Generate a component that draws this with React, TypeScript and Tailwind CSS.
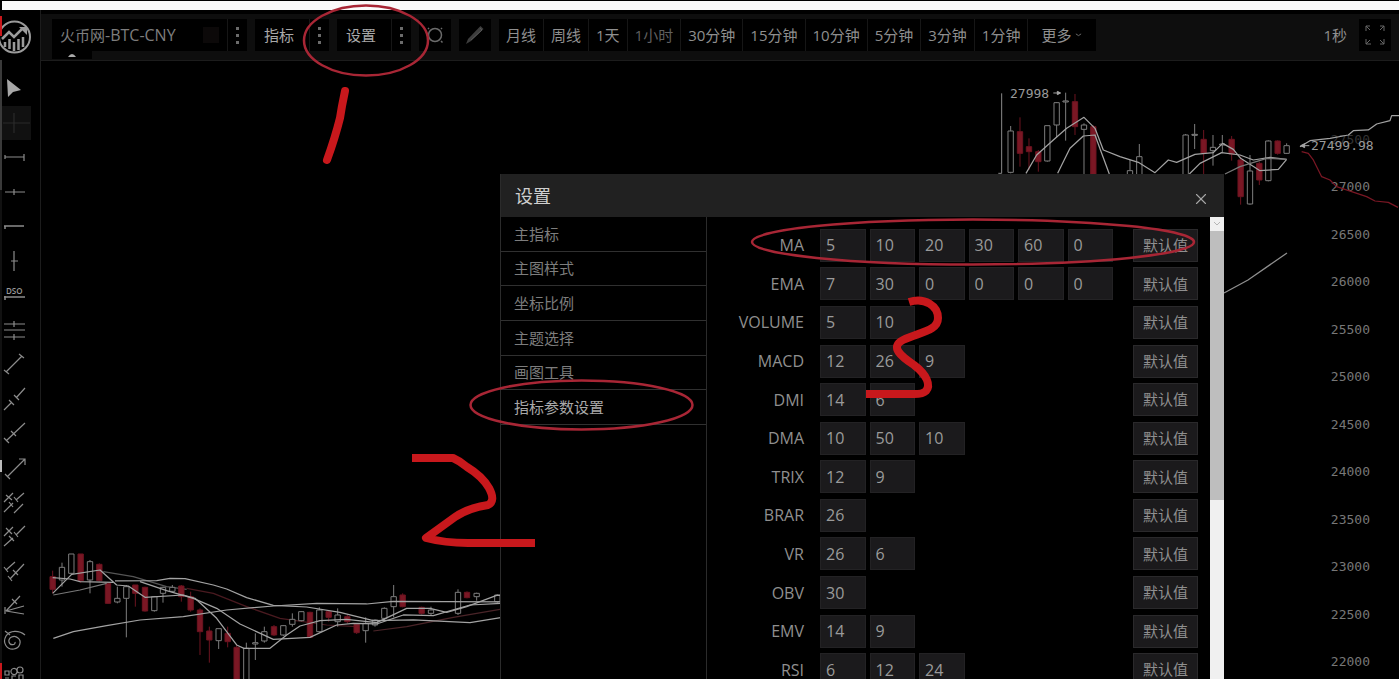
import { useState } from 'react'
import type { ReactNode } from 'react'
import { X } from 'lucide-react'

// x, body top, body bottom, wick top, wick bottom, falling
type Candle = [number, number, number, number, number, boolean]

const LEFT_CANDLES: Candle[] = [
  [38, 140, 178, 122, 190, true], [66, 112, 150, 98, 170, false], [94, 72, 130, 72, 135, false],
  [122, 72, 152, 72, 158, true], [150, 95, 150, 90, 190, false], [178, 103, 152, 100, 155, true],
  [204, 160, 220, 160, 222, true], [232, 205, 216, 170, 220, false], [259, 170, 205, 165, 322, false],
  [286, 165, 190, 165, 230, true], [315, 172, 243, 170, 245, true], [343, 200, 242, 198, 245, false],
  [369, 172, 190, 170, 218, false], [397, 172, 184, 165, 188, false], [424, 168, 200, 165, 215, true],
  [452, 200, 240, 185, 245, true], [480, 240, 305, 235, 375, true], [508, 303, 330, 290, 398, true],
  [536, 296, 332, 296, 357, false], [563, 310, 335, 290, 352, true], [590, 352, 450, 345, 450, true],
  [619, 355, 450, 338, 450, false], [646, 338, 342, 310, 390, false], [673, 305, 333, 290, 338, false],
  [702, 290, 315, 285, 318, true], [730, 287, 315, 285, 318, false], [757, 268, 283, 250, 290, false],
  [784, 245, 272, 243, 274, false], [810, 247, 322, 245, 322, true], [838, 240, 305, 232, 308, false],
  [866, 245, 262, 243, 275, true], [893, 255, 275, 235, 290, false], [922, 260, 275, 255, 280, true],
  [950, 283, 308, 280, 312, true], [977, 280, 302, 262, 338, false], [1005, 270, 285, 268, 290, false],
  [1033, 235, 265, 232, 270, false], [1061, 200, 230, 165, 262, false], [1088, 195, 230, 190, 232, true],
  [1145, 232, 250, 230, 254, true], [1173, 240, 250, 230, 255, false], [1254, 187, 250, 178, 255, false],
  [1281, 187, 203, 184, 205, true], [1310, 190, 200, 188, 212, false], [1372, 195, 215, 193, 218, false],
]

const RIGHT_CANDLES: Candle[] = [
  [272, 393, 517, 378, 520, false], [300, 395, 460, 352, 500, true], [327, 440, 455, 415, 510, true],
  [355, 455, 485, 450, 515, true], [382, 377, 483, 377, 485, false], [410, 308, 375, 306, 412, false],
  [437, 303, 306, 278, 422, false], [465, 305, 380, 282, 405, true], [492, 375, 388, 370, 525, false],
  [520, 380, 530, 376, 530, true], [630, 512, 530, 480, 530, false], [658, 470, 530, 432, 530, false],
  [797, 405, 530, 402, 530, false], [824, 403, 406, 372, 447, false], [851, 418, 460, 390, 530, true],
  [879, 442, 452, 405, 497, false], [907, 432, 435, 405, 458, false], [935, 418, 462, 408, 482, true],
  [962, 480, 590, 470, 614, true], [990, 513, 612, 465, 614, false], [1018, 490, 540, 485, 555, true],
  [1045, 423, 542, 421, 544, false], [1073, 423, 460, 421, 464, true], [1100, 437, 460, 430, 462, false],
]

const PRICES = [27000, 26500, 26000, 25500, 25000, 24500, 24000, 23500, 23000, 22500, 22000]

const PERIODS = ['月线', '周线', '1天', '1小时', '30分钟', '15分钟', '10分钟', '5分钟', '3分钟', '1分钟']

const MENU = ['主指标', '主图样式', '坐标比例', '主题选择', '画图工具', '指标参数设置']

const PARAMS: { name: string; values: number[] }[] = [
  { name: 'MA', values: [5, 10, 20, 30, 60, 0] },
  { name: 'EMA', values: [7, 30, 0, 0, 0, 0] },
  { name: 'VOLUME', values: [5, 10] },
  { name: 'MACD', values: [12, 26, 9] },
  { name: 'DMI', values: [14, 6] },
  { name: 'DMA', values: [10, 50, 10] },
  { name: 'TRIX', values: [12, 9] },
  { name: 'BRAR', values: [26] },
  { name: 'VR', values: [26, 6] },
  { name: 'OBV', values: [30] },
  { name: 'EMV', values: [14, 9] },
  { name: 'RSI', values: [6, 12, 24] },
]

const TOOLS: { label: string; icon: ReactNode }[] = [
  { label: '光标', icon: <path d="M7 8l14 11-8 2-5 5z" fill="#a8a8a8" stroke="none" /> },
  { label: '十字线', icon: <path d="M14 7v20M3 17h27" stroke="#2b2b2b" /> },
  { label: '线段', icon: <path d="M5 17h19M5 15v4M24 14v7" /> },
  { label: '水平线', icon: <path d="M5 17h20M14 14v6" /> },
  { label: '射线', icon: <path d="M4 17h20M5 17v3" strokeWidth="1.5" /> },
  { label: '垂直线', icon: <path d="M14 7v20M11 17h7" /> },
  {
    label: '价格线',
    icon: (
      <>
        <text x="6" y="16" fontSize="8" fontWeight="600" fill="#999" stroke="none">DSO</text>
        <path d="M4 19h21M5 18v4" strokeWidth="1.5" />
      </>
    ),
  },
  { label: '平行线', icon: <path d="M4 11h21M4 17h21M4 24h21M14 8v6M14 21v6" /> },
  { label: '趋势线', icon: <path d="M6 25L22 9M4 23l5 4M19 7l5 4" /> },
  { label: '延长线', icon: <path d="M4 28l8-8M9 18l5 5M16 16l9-10M14 13l5 5" /> },
  { label: '单向线', icon: <path d="M6 25L25 7M4 22l5 5M11 15l5 5" /> },
  { label: '箭头', icon: <path d="M7 26L25 8M5 23l5 5M19 8h6v6" /> },
  { label: '平行通道', icon: <path d="M4 17l9-9M16 15l8-7M4 27l9-9M14 28l9-9M6 10l6 5M14 12l4 5M9 17l4 5" /> },
  { label: '平行射线', icon: <path d="M4 16l9-9M16 15l9-9M4 26l9-8M6 8l6 6M14 12l4 5M9 16l5 5" /> },
  { label: '平行线段', icon: <path d="M6 16l9-8M10 25l14-15M4 13l4 5M8 22l4 5M13 16l5 5" /> },
  { label: '扇形', icon: <path d="M6 22L20 7M6 22l18-5M6 22l18 3M12 10l5 5M5 18v7" /> },
  { label: '螺旋', icon: <path d="M5 8l5 4M25 12C19 7 10 7 6 13c-4 7 1 14 8 13 6-1 8-8 4-11-4-4-10 0-9 4 1 4 7 3 6 0" /> },
  { label: '标记', icon: <path d="M5 13h4v4H5zM5 20h4M11 14a3 3 0 106-1 3 3 0 10-6 1M17 12a3 3 0 106 0 3 3 0 10-6 0M12 21v-3h4M19 21v-4h4v4" /> },
]

function Candles({ items }: { items: Candle[] }) {
  return (
    <>
      {items.map(([x, top, bottom, high, low, falling]) => (
        <g key={x} stroke={falling ? '#6d1420' : '#7d7d7d'} strokeWidth="1">
          <path d={`M${x} ${high}V${top}M${x} ${bottom}V${low}`} vectorEffect="non-scaling-stroke" />
          <rect
            x={x - 8}
            y={top}
            width="16"
            height={bottom - top}
            fill={falling ? '#7a1724' : '#000'}
            vectorEffect="non-scaling-stroke"
          />
        </g>
      ))}
    </>
  )
}

function Line({ points, color = '#a3a3a3' }: { points: string; color?: string }) {
  return (
    <polyline
      points={points}
      stroke={color}
      strokeWidth="1.25"
      strokeLinejoin="round"
      fill="none"
      vectorEffect="non-scaling-stroke"
    />
  )
}

function Chart() {
  return (
    <svg
      className="absolute inset-0 h-full w-full"
      viewBox="41 61 1358 618"
      preserveAspectRatio="xMinYMin slice"
      fill="none"
      aria-hidden="true"
    >
      <g transform="translate(40 530) scale(0.33333)">
        <Line color="#4a1a20" points="440,175 520,190 620,230 720,265 860,285 950,290" />
        <Line color="#4a2428" points="1000,303 1100,290 1240,262 1380,238" />
        <Line color="#555" points="190,125 280,140 380,170 440,178" />
        <Candles items={LEFT_CANDLES} />
        <Line points="40,325 100,305 200,287 300,270 430,260 560,240 700,228 830,220 980,222 1060,214 1380,216" />
        <Line points="38,190 95,133 180,120 230,165 265,168 315,202 430,195 465,205 530,265 590,345 612,355 690,355 740,315 780,288 840,272 920,268 1010,278 1100,235 1170,235 1220,247 1280,230 1370,196 1382,196" />
        <Line points="225,153 350,152 390,145 435,146 520,165 560,177 620,203 700,226 800,231 900,247 1000,272 1120,270 1290,278 1382,263" />
        <Line points="38,143 90,147 120,155 220,157" />
        <Line color="#777" points="40,195 120,180 200,160" />
        <Line points="300,155 380,182 460,205 530,235 600,282 700,328 810,322 890,285 940,280 1010,282 1090,255 1180,257 1290,225 1382,220" />
      </g>
      <g transform="scale(0.33333) translate(2760 0)">
        <path d="M245 280V520h-10" stroke="#8a8a8a" vectorEffect="non-scaling-stroke" />
        <path d="M428 304h18M815 404h18" stroke="#8a8a8a" vectorEffect="non-scaling-stroke" />
        <Candles items={RIGHT_CANDLES} />
        <Line points="318,520 350,465 400,420 440,385 492,352 525,385 550,450 600,470 655,487 705,518 745,480 770,487 825,463 880,458 908,430 940,448 962,475 990,493 1020,512 1075,508 1100,478" />
        <Line points="413,520 450,445 490,408 525,405 545,460 568,522" />
        <Line points="808,522 840,490 905,458 960,465 1000,480 1050,472 1100,478" />
        <Line color="#777" points="915,522 960,500 1040,475 1100,478" />
        <Line points="1140,440 1170,422 1230,415 1285,405 1300,392 1345,390 1370,372 1410,362 1415,347 1437,347" />
        <Line color="#7a1724" points="1145,455 1165,460 1180,480 1205,530 1230,540 1250,560 1340,590 1365,603 1405,607 1434,622" />
        <path d="M400 279h20m-8-5l10 5-10 5z" stroke="#a3a3a3" fill="#a3a3a3" vectorEffect="non-scaling-stroke" />
        <path d="M1168 437h-24m10-6l-12 6 12 6z" stroke="#a3a3a3" fill="#a3a3a3" vectorEffect="non-scaling-stroke" />
      </g>
      <path d="M1224 293l24-13 39-27" stroke="#8f8f8f" strokeWidth="1.25" />
      <g fill="#9a9a9a" fontSize="13" className="font-['DejaVu_Sans_Mono',monospace]">
        <text x="1010" y="98">27998</text>
        <text x="1311" y="150">27499.98</text>
      </g>
    </svg>
  )
}

function Logo() {
  return (
    <svg className="h-[34px] w-8 shrink-0" viewBox="0 0 32 34" fill="none" stroke="#9b9b9b" aria-label="logo">
      <circle cx="14.5" cy="17" r="15.5" strokeWidth="2" />
      <path d="M2 19l7-7 5 5 9-9" strokeWidth="2.5" />
      <path d="M19 7h8v8z" fill="#9b9b9b" stroke="none" />
      <path d="M5 22v5M9.5 19v10M14 22v9M18.5 19v11M23 17v10" strokeWidth="2.5" />
    </svg>
  )
}

function Sidebar() {
  return (
    <aside className="relative flex w-[41px] shrink-0 flex-col overflow-hidden border-r border-[#1c1c1c] pt-[10px]">
      <Logo />
      <div className="mt-[17px] grid h-[621px] shrink-0 auto-rows-fr">
        {TOOLS.map((tool, i) => (
          <button
            key={tool.label}
            type="button"
            aria-label={tool.label}
            className={`flex w-[31px] items-center ${i === 1 ? 'bg-[#111]' : ''}`}
          >
            <svg className="h-[34px] w-[30px]" viewBox="0 0 30 34" fill="none" stroke="#8c8c8c" strokeWidth="1.2">
              {tool.icon}
            </svg>
          </button>
        ))}
      </div>
      {/* edge of the panel docked on the left */}
      <div className="absolute inset-y-0 left-0 flex w-0.5 flex-col">
        <div className="mt-[6px] h-5 bg-[#c8181c]" />
        <div className="mt-6 h-[130px] bg-[#3a3a3a]" />
        <div className="h-[270px] bg-[#111]" />
        <div className="h-3 bg-[#bbb]" />
        <div className="flex-1 bg-[#111]" />
        <div className="h-4 bg-[#c8181c]" />
      </div>
    </aside>
  )
}

function Dots() {
  return (
    <span className="flex h-full w-5 flex-col items-center justify-center gap-1 border-l border-[#161616]">
      <i className="size-[3px] bg-[#6b6b6b]" />
      <i className="size-[3px] bg-[#6b6b6b]" />
      <i className="size-[3px] bg-[#6b6b6b]" />
    </span>
  )
}

function Toolbar() {
  return (
    <header className="mt-1 border-b border-[#1c1c1c] bg-[#0e0e0e] pt-[5px] pb-px pr-2 pl-[11px] text-[15px] text-[#8f8f8f]">
      <div className="flex h-8 gap-2 whitespace-nowrap">
        <button type="button" className="flex w-[195px] items-center bg-black pl-2 text-[#7d7d7d]">
          <span className="flex-1 text-left">
            火币网<span className="text-base">-BTC-CNY</span>
          </span>
          <i className="mr-2 h-4 w-4 bg-[#0c0909]" />
          <Dots />
        </button>
        <button type="button" className="flex w-[74px] items-center bg-black pl-[9px] text-[#a8a8a8]">
          <span className="flex-1 text-left">指标</span>
          <Dots />
        </button>
        <button type="button" className="flex w-[74px] items-center bg-black pl-[9px] text-[#a8a8a8]">
          <span className="flex-1 text-left">设置</span>
          <Dots />
        </button>
        <button type="button" aria-label="搜索" className="flex w-8 items-center justify-center bg-black">
          <svg className="size-5" viewBox="0 0 20 20" fill="none" stroke="#6b6b6b" strokeWidth="1.5">
            <circle cx="10" cy="10" r="6.5" />
            <path d="M16 16l1.5 1.5M4 4L3 3M16 4l1-1" />
          </svg>
        </button>
        <button type="button" aria-label="画笔" className="flex w-8 items-center justify-center bg-black">
          <svg className="size-5" viewBox="0 0 20 20">
            <path d="M15.5 1l3 3L6 16l-5 3 2-5z" fill="#3d3d3d" />
            <path d="M15 3l2 2L6 15" stroke="#555" fill="none" />
          </svg>
        </button>
        <nav className="flex bg-black">
          {PERIODS.map((period) => (
            <button
              key={period}
              type="button"
              className={`border-r border-[#161616] px-[7px] ${period === '1小时' ? 'text-[#5f5f5f]' : ''}`}
            >
              {period}
            </button>
          ))}
          <button type="button" className="flex items-center gap-1 pr-[14px] pl-[13px]">
            更多
            <svg className="w-[7px]" viewBox="0 0 8 5" fill="none" stroke="#777">
              <path d="M1 1l3 2 3-2" />
            </svg>
          </button>
        </nav>
        <div className="ml-auto flex items-center gap-3">
          <span>1秒</span>
          <button type="button" aria-label="全屏" className="flex size-8 items-center justify-center bg-black">
            <svg className="size-5" viewBox="0 0 20 20" fill="none" stroke="#666">
              <path d="M1 6V1h4M1 1l4 4M15 1h4v5M19 1l-4 4M1 14v5h5M1 19l4-4M19 14v5h-4M19 19l-4-4" />
            </svg>
          </button>
        </div>
      </div>
      <div className="flex h-2 w-10 items-center justify-center bg-black">
        <svg className="w-2" viewBox="0 0 8 4" fill="#aaa" aria-hidden="true">
          <path d="M0 4q4-6 8 0z" />
        </svg>
      </div>
    </header>
  )
}

function SettingsDialog() {
  const [active, setActive] = useState('指标参数设置')
  const [params, setParams] = useState(PARAMS)

  const update = (row: number, col: number, value: string) => {
    setParams(params.map((p, i) =>
      i === row ? { ...p, values: p.values.map((v, j) => (j === col ? Number(value) : v)) } : p
    ))
  }

  const reset = (row: number) => {
    setParams(params.map((p, i) => (i === row ? PARAMS[row] : p)))
  }

  return (
    <section
      role="dialog"
      aria-labelledby="settings-title"
      className="absolute top-[113px] bottom-0 left-[459px] flex w-[724px] flex-col overflow-hidden border-l border-[#2b2b2b] bg-black"
    >
      <div className="flex h-[43px] shrink-0 items-center justify-between bg-[#212121] pr-[14px] pl-[14px]">
        <h2 id="settings-title" className="text-lg text-[#cfcfcf]">设置</h2>
        <button type="button" aria-label="关闭" className="mt-1.5 text-[#a8a8a8]">
          <X size={18} strokeWidth={1.5} />
        </button>
      </div>

      <div className="flex min-h-0 flex-1">
        <div className="w-[206px] shrink-0 border-r border-[#2b2b2b]">
          <ul className="grid h-52 grid-rows-6">
            {MENU.map((item) => (
              <li key={item} className="border-b border-[#303030]">
                <button
                  type="button"
                  onClick={() => setActive(item)}
                  className={`h-full w-full pl-[13px] text-left text-[15px] ${item === active ? 'text-[#a8a8a8]' : 'text-[#7d7d7d]'}`}
                >
                  {item}
                </button>
              </li>
            ))}
          </ul>
        </div>

        <form className="grid h-[472px] flex-1 auto-rows-fr pt-[9px] pr-3">
          {params.map((param, row) => (
            <div key={param.name} className="flex items-center">
              <label htmlFor={`${param.name}-0`} className="w-[97px] text-right text-base text-[#8f8f8f]">
                {param.name}
              </label>
              <div className="ml-4 grid w-[293px] grid-cols-6 gap-1">
                {param.values.map((value, col) => (
                  <input
                    key={col}
                    id={`${param.name}-${col}`}
                    aria-label={`${param.name} ${col + 1}`}
                    value={value}
                    onChange={(e) => update(row, col, e.target.value)}
                    className="h-[33px] w-full min-w-0 border border-[#232224] bg-[#1b1a1c] pl-[5px] text-base text-[#9a9a9a]"
                  />
                ))}
              </div>
              <button
                type="button"
                onClick={() => reset(row)}
                className="ml-auto h-[33px] w-[65px] border border-[#2a292b] bg-[#1b1a1c] text-[15px] text-[#8f8f8f]"
              >
                默认值
              </button>
            </div>
          ))}
        </form>

        <div className="flex w-[14px] shrink-0 flex-col bg-[#f0f0f0]">
          <div className="flex h-[14px] items-center justify-center">
            <svg className="w-2" viewBox="0 0 8 6" fill="none" stroke="#b5b5b5">
              <path d="M1 1l3 3 3-3" />
            </svg>
          </div>
          <div className="h-[269px] bg-[#bebebe]" />
        </div>
      </div>
    </section>
  )
}

// hand-drawn step marks 1, 2, 3 and the rings round the controls they point at
function Annotations() {
  return (
    <svg
      className="pointer-events-none absolute inset-0 h-full w-full"
      viewBox="0 0 1399 679"
      preserveAspectRatio="xMinYMin meet"
      fill="none"
      aria-hidden="true"
    >
      <g stroke="#a82635" strokeWidth="2.5">
        <ellipse cx="366" cy="40.5" rx="62" ry="35" />
        <ellipse cx="581.5" cy="405" rx="111" ry="24.5" />
        <ellipse cx="973" cy="242" rx="221" ry="22.5" />
      </g>
      <g stroke="#c8181c" strokeWidth="8" strokeLinejoin="round">
        <path d="M345 91L342 106L340 118Q335 138 327 160" strokeLinecap="round" />
        <path d="M412 458H453Q460 461 467 467Q482 476 489 488Q496 501 488 505Q468 508 455 517L426 538Q445 543 468 543H535" />
        <path d="M909 302C925 297 938 306 938 318C938 331 920 332 903 340C889 347 902 357 914 365C927 375 931 385 926 391C922 395 915 394 910 394H866" />
      </g>
    </svg>
  )
}

export default function App() {
  return (
    <div className="relative flex h-screen flex-col overflow-hidden bg-black font-['Open_Sans','Noto_Sans_CJK_SC',sans-serif]">
      <div className="mt-px ml-0.5 h-[9px] shrink-0 bg-[#fafafa]" />
      <div className="flex min-h-0 flex-1">
        <Sidebar />
        <div className="flex min-w-0 flex-1 flex-col">
          <Toolbar />
          <main className="relative min-h-0 flex-1">
            <Chart />
            <ol className="flex h-full flex-col items-end justify-between pt-[69px] pr-[29px] pb-[7px] font-['DejaVu_Sans_Mono',monospace] text-[13px] leading-5 text-[#777]">
              <li className="text-[#333]">27500</li>
              {PRICES.map((price) => (
                <li key={price}>{price}</li>
              ))}
            </ol>
            <SettingsDialog />
          </main>
        </div>
      </div>
      <Annotations />
    </div>
  )
}
